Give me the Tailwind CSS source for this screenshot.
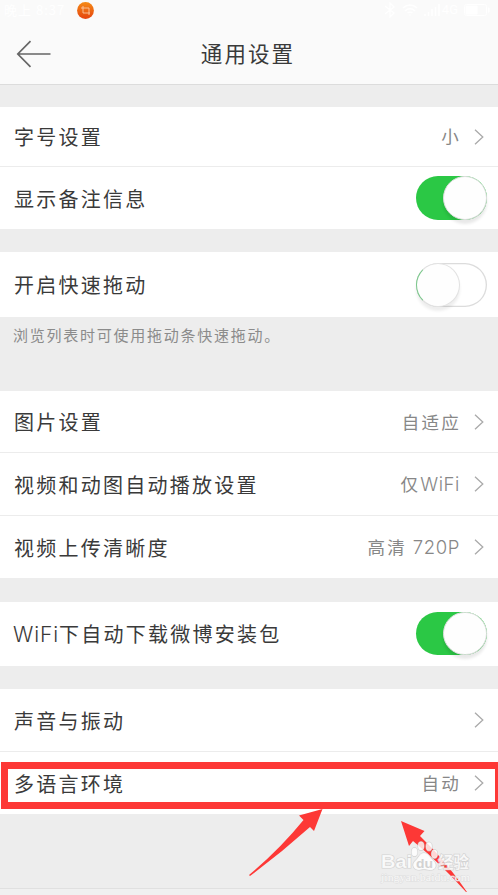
<!DOCTYPE html>
<html lang="zh-CN">
<head>
    <meta charset="UTF-8">
    <meta name="viewport" content="width=device-width, initial-scale=1.0">
    <title>通用设置</title>
    <script src="https://cdn.jsdelivr.net/npm/@tailwindcss/browser@4"></script>
</head>
<body class="bg-[#ededed] font-['Noto_Sans_CJK_SC',sans-serif] text-[#3a3a3a]">
    <div class="relative flex h-[895px] w-[498px] flex-col overflow-hidden">
        <!-- Status bar and title -->
        <header class="h-[85px] shrink-0 border-b border-[#dcdcdc] bg-[#fafafa]">
            <div class="flex h-5 items-center justify-between pl-1 pr-2 text-[13px] leading-5 text-white">
                <div class="flex items-center">
                    <span class="w-[73px] whitespace-nowrap tracking-[1px]">晚上 8:37</span>
                    <svg class="h-[17px] w-[17px]" viewBox="0 0 17 17" fill="none">
                        <defs>
                            <linearGradient id="orb" x1="0" y1="0" x2="0" y2="1">
                                <stop offset="0" stop-color="#f58a16" />
                                <stop offset="1" stop-color="#e5440f" />
                            </linearGradient>
                        </defs>
                        <circle cx="8.5" cy="8.5" r="8.4" fill="url(#orb)" />
                        <path d="M4 6h8v7M6 4v7h7" stroke="#fbc7a0" stroke-width="0.9" />
                    </svg>
                </div>
                <div class="flex items-center gap-1.5 font-['Roboto',sans-serif]">
                    <svg class="h-4 w-3" viewBox="0 0 12 16" fill="none" stroke="#fff" stroke-width="1.3"><path d="M1 4l9 7-4 4V1l4 4-9 7" /></svg>
                    <svg class="h-3 w-4" viewBox="0 0 16 12" fill="none" stroke="#fff" stroke-width="1.3"><path d="M1 4c4-4 10-4 14 0M3 7c3-3 7-3 10 0M5.500 9c2-1.500 3-1.500 5 0M7.500 11h1" /></svg>
                    <svg class="h-3 w-4" viewBox="0 0 16 12" fill="none" stroke="#fff" stroke-width="1.5"><path d="M1 12v-2M4.500 12V8M8 12V5M11.500 12V3M15 12V0" /></svg>
                    <span class="-ml-1">4G</span>
                    <svg class="h-3 w-[26px]" viewBox="0 0 26 12" fill="none" stroke="#fff"><rect x=".5" y=".5" width="22" height="11" rx="2" /><path d="M2 2h11v8H2zM24 4h1v4h-1" fill="#fff" /></svg>
                </div>
            </div>
            <div class="relative flex h-16 items-center justify-center pr-1">
                <svg class="absolute left-4 top-5 h-7 w-[35px]" viewBox="0 0 35 28" fill="none" stroke="#666" stroke-width="1.7"><path d="M34.500 14H1.800M14.500 1.200L1.800 14l12.700 12.800" /></svg>
                <h1 class="pl-[2px] pt-px text-[21.5px] leading-8 tracking-[2.1px]">通用设置</h1>
            </div>
        </header>

        <main class="flex flex-col pt-[22px] text-[20px] tracking-[2.25px]">
            <section class="h-[122px] bg-white">
                <div class="flex h-[60px] items-center border-b border-[#ececec] pl-[14px] pr-[14px]">
                    <span class="flex-1 pt-px">字号设置</span>
                    <span class="mr-[13px] text-[17.5px] text-[#878787]">小</span>
                    <svg class="h-4 w-[10px]" viewBox="0 0 10 16" fill="none" stroke="#aaa" stroke-width="1.3"><path d="M1 .7L8.800 8 1 15.300" /></svg>
                </div>
                <div class="flex h-[62px] items-center pl-[14px] pr-[11px]">
                    <span class="flex-1 pt-px">显示备注信息</span>
                    <span class="flex h-11 w-[71px] justify-end rounded-full bg-[#2bc845]">
                        <i class="size-11 rounded-full border border-[#dedede] bg-[#fefefe] shadow-[0_4px_3px_rgba(0,0,0,0.09)]"></i>
                    </span>
                </div>
            </section>

            <section class="mt-[23px] flex h-[65px] items-center bg-white pl-[14px] pr-[11px]">
                <span class="flex-1 pt-px">开启快速拖动</span>
                <span class="flex h-11 w-[71px] rounded-full shadow-[inset_0_0_0_1.3px_#dcdcdc]">
                    <i class="size-11 rounded-full border border-[#e2e2e2] border-l-[#79c78a] bg-[#fefefe] shadow-[0_4px_3px_rgba(0,0,0,0.07)]"></i>
                </span>
            </section>
            <p class="h-[74px] pl-[13px] pt-[6px] text-[15px] leading-6 tracking-[1.75px] text-[#8b8b8b]">浏览列表时可使用拖动条快速拖动。</p>

            <section class="h-[187px] bg-white">
                <div class="flex h-[62px] items-center border-b border-[#ececec] px-[14px]">
                    <span class="flex-1 pt-px">图片设置</span>
                    <span class="mr-[13px] pt-px text-[17.5px] text-[#878787]">自适应</span>
                    <svg class="h-4 w-[10px]" viewBox="0 0 10 16" fill="none" stroke="#aaa" stroke-width="1.3"><path d="M1 .7L8.800 8 1 15.300" /></svg>
                </div>
                <div class="flex h-[63px] items-center border-b border-[#ececec] px-[14px]">
                    <span class="flex-1 pt-[2px]">视频和动图自动播放设置</span>
                    <span class="mr-[14px] pt-[2px] text-[17.5px] text-[#878787]">仅<span class="font-['Inter',sans-serif] text-[18.5px] font-light tracking-[0.6px]">WiFi</span></span>
                    <svg class="h-4 w-[10px]" viewBox="0 0 10 16" fill="none" stroke="#aaa" stroke-width="1.3"><path d="M1 .7L8.800 8 1 15.300" /></svg>
                </div>
                <div class="flex h-[62px] items-center px-[14px]">
                    <span class="flex-1 pt-[2px]">视频上传清晰度</span>
                    <span class="mr-[14px] pt-px text-[17.5px] text-[#878787]">高清<span class="font-['Inter',sans-serif] text-[18.5px] font-light tracking-[0.6px]"> 720P</span></span>
                    <svg class="h-4 w-[10px]" viewBox="0 0 10 16" fill="none" stroke="#aaa" stroke-width="1.3"><path d="M1 .7L8.800 8 1 15.300" /></svg>
                </div>
            </section>

            <section class="mt-6 flex h-16 items-center bg-white pb-px pl-[13px] pr-[11px]">
                <span class="flex-1 pt-[3px]"><span class="font-['Inter',sans-serif] text-[21px] font-light tracking-[0.9px]">WiFi</span>下自动下载微博安装包</span>
                <span class="flex h-[43px] w-[71px] justify-end rounded-full bg-[#2bc845]">
                    <i class="h-[43px] w-11 rounded-full border border-[#dedede] bg-[#fefefe] shadow-[0_4px_3px_rgba(0,0,0,0.09)]"></i>
                </span>
            </section>

            <section class="mt-[23px] h-[125px] bg-white">
                <div class="flex h-[63px] items-center border-b border-[#ececec] px-[14px]">
                    <span class="flex-1 pt-[2px]">声音与振动</span>
                    <svg class="h-4 w-[10px]" viewBox="0 0 10 16" fill="none" stroke="#aaa" stroke-width="1.3"><path d="M1 .7L8.800 8 1 15.300" /></svg>
                </div>
                <div class="flex h-[62px] items-center px-[14px]">
                    <span class="flex-1 pt-[2px]">多语言环境</span>
                    <span class="mr-[13px] pt-px text-[17.5px] text-[#878787]">自动</span>
                    <svg class="h-4 w-[10px]" viewBox="0 0 10 16" fill="none" stroke="#aaa" stroke-width="1.3"><path d="M1 .7L8.800 8 1 15.300" /></svg>
                </div>
            </section>
        </main>
        <div class="mt-auto h-[7px] border-t border-[#e0e0e0] bg-[#f0f0f0]"></div>

        <!-- Highlight box, arrows and watermark -->
        <svg class="absolute left-0 top-0 h-[895px] w-[498px]" viewBox="0 0 498 895">
            <path d="M4.500 765.500H498.500V805.500H4.500Z" fill="none" stroke="#fd3836" stroke-width="7" />
            <path d="M322.500 809L299 815.500L303.500 820Q280 849 249 875L250 876Q281 853 310 827L314 831Z" fill="#fd3836" />
            <path d="M401 821L424.500 831L420 836Q446 861 467 892L466 892Q441 864 413 841L409 846Z" fill="#fd3836" />
            <g fill="#fff" fill-opacity=".8" stroke="#cbcbcb" stroke-opacity=".8" stroke-width="1.2" paint-order="stroke">
                <ellipse cx="414.500" cy="852" rx="3" ry="4.300" />
                <ellipse cx="421" cy="846" rx="3" ry="4.300" />
                <ellipse cx="429" cy="846.500" rx="3" ry="4.300" />
                <ellipse cx="434.500" cy="854" rx="3" ry="4.300" />
                <path d="M424 853c-5 0-5 5-9 8-4 4-1 9 4 9 4-1 6-1 10 0 6 1 9-4 5-9-4-3-5-8-10-8z" />
                <text x="381" y="868" font-family="Liberation Sans" font-weight="700" font-size="18" textLength="31" lengthAdjust="spacingAndGlyphs">Bai</text>
                <text x="438" y="867.500" font-family="Noto Sans CJK SC" font-weight="700" font-size="15.500" textLength="31" lengthAdjust="spacingAndGlyphs">经验</text>
                <text x="381" y="881" font-family="Liberation Serif" font-size="10.500" textLength="89" lengthAdjust="spacingAndGlyphs" stroke="#dadada" stroke-width=".9">jingyan.baidu.com</text>
            </g>
            <text x="416" y="867.500" font-family="Liberation Sans" font-weight="700" font-size="13" fill="#d2d2d2" textLength="17" lengthAdjust="spacingAndGlyphs">du</text>
        </svg>
    </div>
</body>
</html>
